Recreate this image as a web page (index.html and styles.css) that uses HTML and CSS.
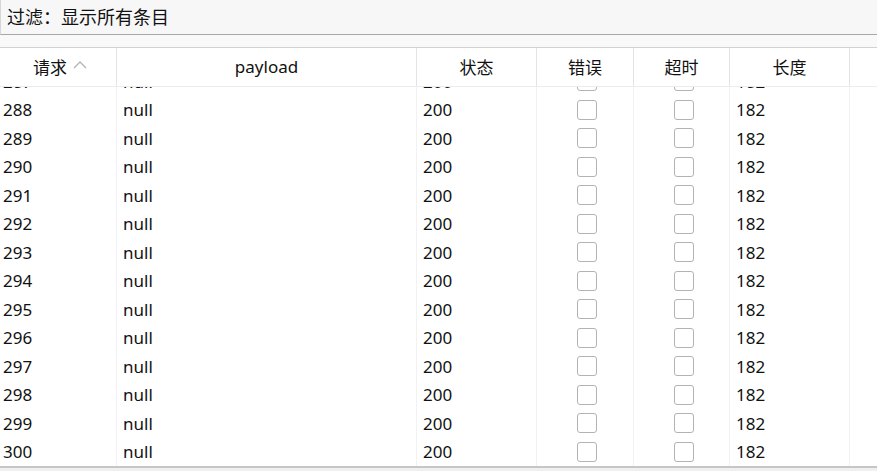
FILE: index.html
```html
<!DOCTYPE html>
<html lang="zh">
<head>
<meta charset="utf-8">
<link rel="stylesheet" href="styles.css">
</head>
<body>
<div class="filter">过滤：显示所有条目</div>
<div class="band"></div>
<div class="table">
  <div class="row head">
    <div class="cell c1">请求<svg class="caret" width="14" height="8" viewBox="0 0 14 8"><polyline points="1,7 7,1 13,7" fill="none" stroke="#b4b4b4" stroke-width="1.3"/></svg></div>
    <div class="cell c2">payload</div>
    <div class="cell c3">状态</div>
    <div class="cell c4">错误</div>
    <div class="cell c5">超时</div>
    <div class="cell c6">长度</div>
    <div class="cell c7"></div>
  </div>
  <div class="body" id="body"></div>
</div>
<div class="bottom"></div>
<script src="app.js"></script>
</body>
</html>
```

FILE: app.js
```js
var body = document.getElementById('body');
var html = '';
for (var i = 287; i <= 300; i++) {
  html += '<div class="row">' +
    '<div class="cell c1">' + i + '</div>' +
    '<div class="cell c2">null</div>' +
    '<div class="cell c3">200</div>' +
    '<div class="cell c4"><span class="cb"></span></div>' +
    '<div class="cell c5"><span class="cb"></span></div>' +
    '<div class="cell c6">182</div>' +
    '<div class="cell c7"></div>' +
    '</div>';
}
body.innerHTML = html;
```

FILE: styles.css
```css
* { box-sizing: border-box; }
html, body {
  margin: 0;
  padding: 0;
  width: 877px;
  height: 471px;
  overflow: hidden;
  background: #f7f7f7;
  font-family: "Noto Sans", "Noto Sans CJK SC", sans-serif;
  color: #111;
}
.filter {
  height: 35px;
  background: #f7f7f7;
  border-left: 1px solid #d6d6d6;
  border-bottom: 1px solid #a8a8a8;
  padding-left: 6px;
  font-size: 18px;
  line-height: 33px;
  font-family: "Noto Sans CJK SC", sans-serif;
}
.band {
  height: 12px;
  background: #f9f9f9;
}
.table {
  border-top: 1px solid #d2d2d2;
  background: #fff;
  height: 419px;
  display: flex;
  flex-direction: column;
}
.row {
  display: flex;
  height: 28.5px;
  flex: none;
  font-size: 17px;
  align-items: stretch;
}
.cell {
  display: flex;
  align-items: center;
  border-right: 1px solid #f2f2f2;
  padding-left: 6px;
  white-space: nowrap;
}
.c1 { width: 117px; padding-left: 3px; }
.c2 { width: 300px; }
.c3 { width: 120px; }
.c4 { width: 97px; justify-content: center; padding-left: 4px; }
.c5 { width: 96px; justify-content: center; padding-left: 4px; }
.c6 { width: 120px; }
.c7 { flex: 1; border-right: none; }
.head {
  height: 39px;
  border-bottom: 1px solid #ececec;
  font-family: "Noto Sans CJK SC", sans-serif;
  font-size: 17px;
}
.head .cell {
  justify-content: center;
  padding-left: 0;
  border-right: 1px solid #e3e3e3;
  padding-bottom: 1px;
}
.head .c1 { padding-left: 4px; }
.head .c2 { font-family: "Noto Sans", sans-serif; }
.head .c7 { border-right: none; }
.caret { margin-left: 6px; margin-top: -3px; }
.body {
  flex: 1;
  overflow: hidden;
  display: flex;
  flex-direction: column;
  justify-content: flex-end;
}
.cb {
  width: 20px;
  height: 20px;
  border: 1.5px solid #b3b3b3;
  border-radius: 3px;
  background: #fff;
}
.bottom {
  height: 5px;
  border-top: 2px solid #c8c4c8;
  background: #f0f0f0;
}
```
